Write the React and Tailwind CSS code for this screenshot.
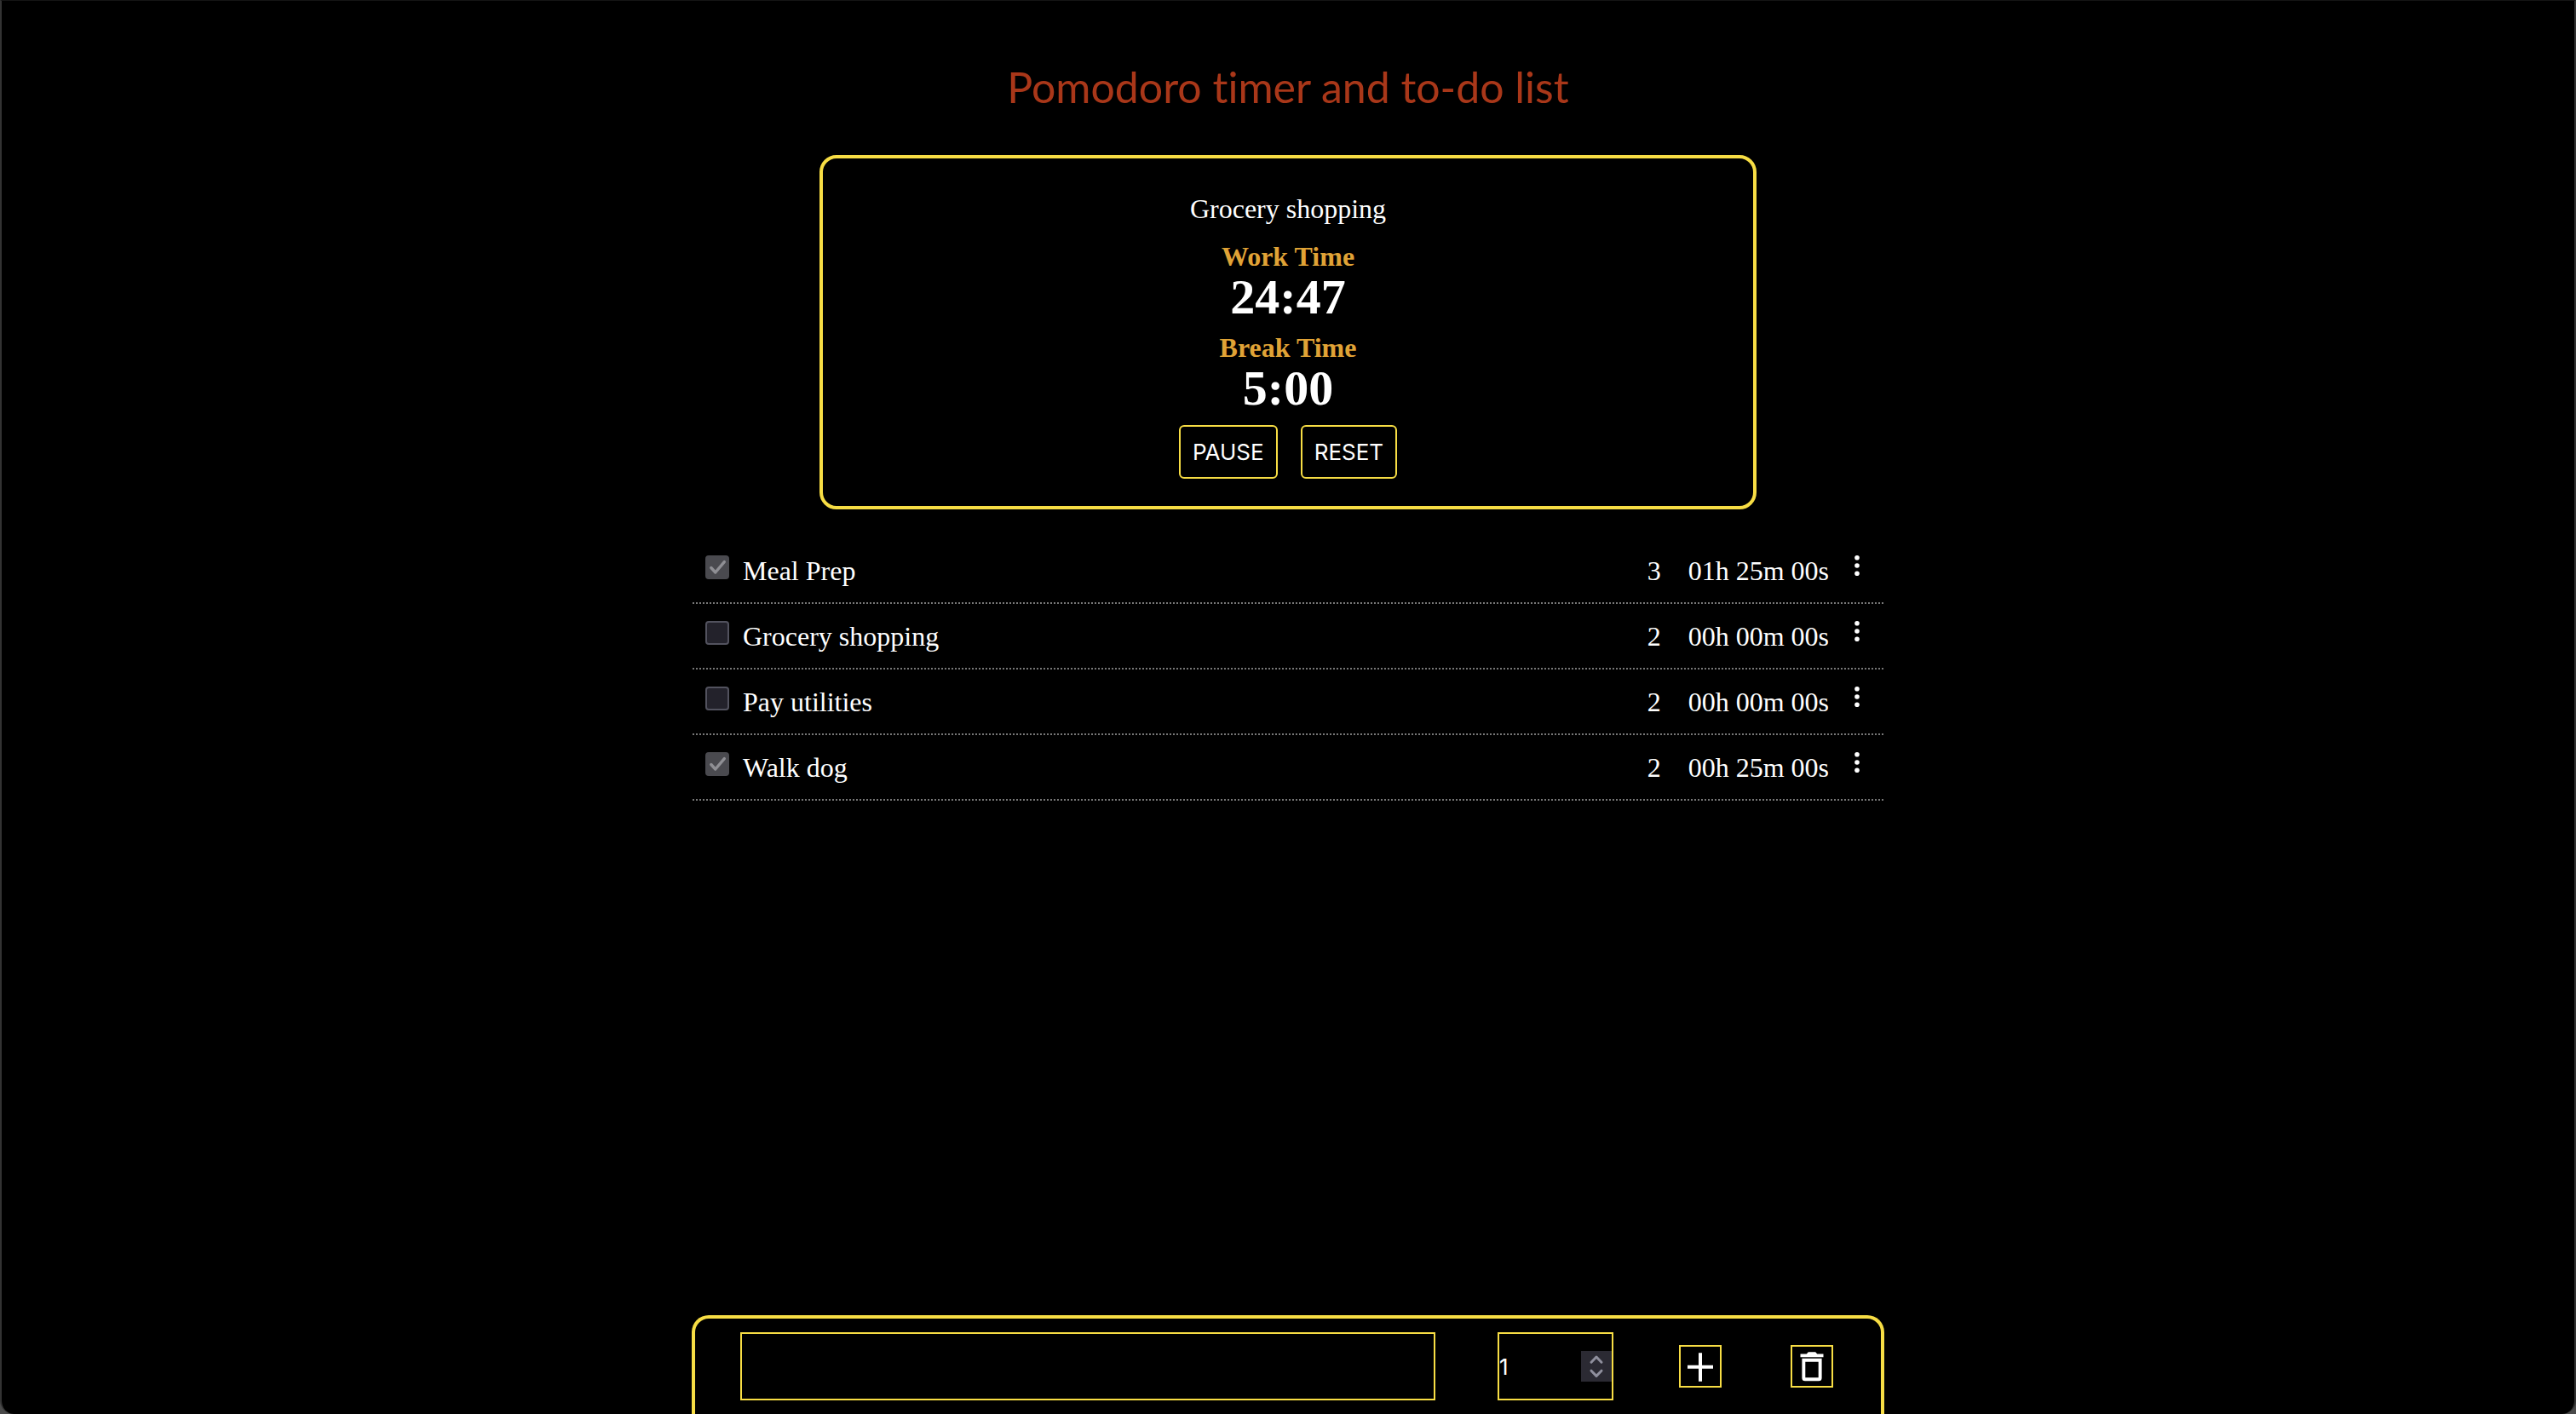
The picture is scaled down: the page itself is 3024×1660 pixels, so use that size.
const TASKS = [
  { name: "Meal Prep", done: true, count: 3, time: "01h 25m 00s" },
  { name: "Grocery shopping", done: false, count: 2, time: "00h 00m 00s" },
  { name: "Pay utilities", done: false, count: 2, time: "00h 00m 00s" },
  { name: "Walk dog", done: true, count: 2, time: "00h 25m 00s" },
];

function TimerButton({ children }) {
  return (
    <button
      type="button"
      className="h-[63px] rounded-md border-2 border-[#f7dd44] px-[14px] font-[Inter,sans-serif] text-[26px] leading-8"
    >
      {children}
    </button>
  );
}

function Timer() {
  return (
    <section className="mt-[50px] flex w-[1100px] max-w-full flex-col items-center rounded-[20px] border-4 border-[#f7dd44] pt-[40px] pb-[32px]">
      <p className="leading-[38px]">Grocery shopping</p>
      <h2 className="mt-[18px] font-bold leading-[38px] text-[#e0a336]">Work Time</h2>
      <p className="text-[58px] font-bold leading-[58px]">24:47</p>
      <h2 className="mt-[11px] font-bold leading-[38px] text-[#e0a336]">Break Time</h2>
      <p className="text-[58px] font-bold leading-[58px]">5:00</p>
      <div className="mt-[14px] flex gap-[27px]">
        <TimerButton>PAUSE</TimerButton>
        <TimerButton>RESET</TimerButton>
      </div>
    </section>
  );
}

function TaskRow({ task, id }) {
  return (
    <li className="flex h-[77px] items-start border-b-2 border-dotted border-[#777] pt-5 pr-4 pl-[15px]">
      <span className="grid">
        <input
          id={id}
          type="checkbox"
          defaultChecked={task.done}
          className="peer col-start-1 row-start-1 size-7 appearance-none rounded-[4px] border-2 border-[#52525e] bg-[#23222b] checked:border-[#4a4a4f] checked:bg-[#4a4a4f]"
        />
        <svg viewBox="0 0 28 28" className="pointer-events-none invisible col-start-1 row-start-1 size-7 peer-checked:visible" fill="none" stroke="#8f8f94" strokeWidth="3.4" strokeLinecap="round" strokeLinejoin="round" aria-hidden="true">
          <path d="M6.8 14.5 11.8 20 22.3 7.6" />
        </svg>
      </span>
      <label htmlFor={id} className="ml-4 flex-1 leading-9">{task.name}</label>
      <span className="leading-9">{task.count}</span>
      <span className="ml-8 leading-9">{task.time}</span>
      <button type="button" aria-label={`Options for ${task.name}`} className="-mt-[3px] ml-[18px]">
        <svg viewBox="0 0 30 30" className="size-[30px]" fill="#fff" aria-hidden="true">
          <circle cx="15" cy="5.7" r="2.8" />
          <circle cx="15" cy="15" r="2.8" />
          <circle cx="15" cy="24.3" r="2.8" />
        </svg>
      </button>
    </li>
  );
}

function AddBar() {
  return (
    <form className="flex h-[116px] w-[1400px] max-w-full items-center rounded-t-[20px] border-4 border-b-0 border-[#f7dd44] pr-[56px] pl-[53px]">
      <input aria-label="Task name" type="text" className="mr-[73px] h-20 min-w-0 flex-1 border-2 border-[#f7dd44] bg-black px-1 font-[Inter,sans-serif] text-[26px] outline-none" />
      <div className="mr-[77px] flex h-20 w-[136px] items-center border-2 border-[#f7dd44]">
        <input
          aria-label="Number of sessions"
          type="number"
          defaultValue="1"
          min="1"
          className="h-full min-w-0 flex-1 appearance-none bg-black font-[Inter,sans-serif] text-[26px] outline-none [&::-webkit-inner-spin-button]:appearance-none"
        />
        <span className="flex h-9 w-9 flex-col bg-[#2b2a33]">
          <button type="button" aria-label="Increase" className="h-[18px]">
            <svg viewBox="0 0 36 18" className="h-[18px] w-9" fill="none" stroke="#8f8f9d" strokeWidth="3" aria-hidden="true">
              <path d="M12 13.2 18 7l6 6.2" strokeLinecap="round" strokeLinejoin="round" />
            </svg>
          </button>
          <button type="button" aria-label="Decrease" className="h-[18px]">
            <svg viewBox="0 0 36 18" className="h-[18px] w-9" fill="none" stroke="#8f8f9d" strokeWidth="3" aria-hidden="true">
              <path d="M12 5.2 18 11.4l6-6.2" strokeLinecap="round" strokeLinejoin="round" />
            </svg>
          </button>
        </span>
      </div>
      <button type="button" aria-label="Add task" className="mr-[81px] size-[50px] border-2 border-[#f7dd44]">
        <svg viewBox="0 0 46 46" className="size-[46px]" fill="#fff" aria-hidden="true">
          <path d="M21 10.3h4v14.5h13v4H25v15h-4v-15H8v-4h13z" transform="translate(0 -3)" />
        </svg>
      </button>
      <button type="button" aria-label="Delete tasks" className="size-[50px] border-2 border-[#f7dd44]">
        <svg viewBox="0 0 46 46" className="size-[46px]" fill="#fff" aria-hidden="true">
          <path d="M9.5 8.4h7.3l2-2.2h8.4l2 2.2h7.3v3.8H9.5z" />
          <path fillRule="evenodd" d="M11.4 13.8h23.2v22.9q0 3.6-3.6 3.6H15q-3.6 0-3.6-3.6zM15.3 17.8v18.5h15.4V17.8z" />
        </svg>
      </button>
    </form>
  );
}

export default function App() {
  return (
    <div className="flex min-h-screen bg-[#4a4a4a]">
      <div className="flex flex-1 flex-col items-center overflow-hidden rounded-b-2xl border-x-2 border-t border-x-[#333] border-t-[#151515] bg-black font-['Liberation_Serif',serif] text-[32px] text-white">
        <h1 className="mt-[69px] font-[Papyrus,Lato,fantasy] text-[50px] leading-[64px] text-[#a93719] [font-variant-ligatures:none]">
          Pomodoro timer and to-do list
        </h1>
        <div className="-mt-[2px] flex w-full justify-center">
          <Timer />
        </div>
        <ul className="mt-[34px] mb-8 w-[1398px] max-w-full">
          {TASKS.map((task, i) => (
            <TaskRow key={task.name} task={task} id={`task-${i}`} />
          ))}
        </ul>
        <div className="mt-auto">
          <AddBar />
        </div>
      </div>
    </div>
  );
}
